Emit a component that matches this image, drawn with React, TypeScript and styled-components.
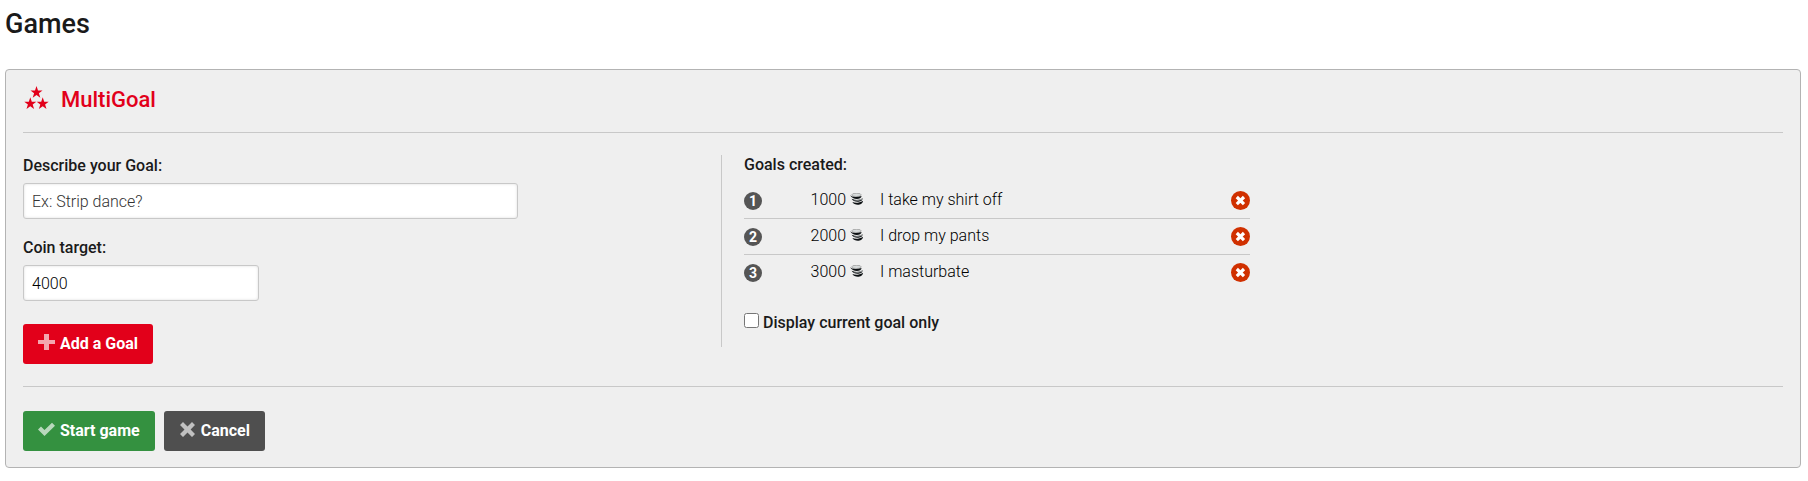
import React, { useState } from "react";
import styled, { createGlobalStyle, css } from "styled-components";

const GlobalStyle = createGlobalStyle`
  *, *::before, *::after { box-sizing: border-box; }
  body {
    margin: 0;
    background: #fff;
    color: #1a1a1a;
    font: 300 16px/20px Roboto, "Liberation Sans", sans-serif;
  }
`;

const Page = styled.main`
  padding: 8px 7px 12px 5px;
`;

const PageTitle = styled.h1`
  margin: 0 0 29px;
  font-size: 27px;
  line-height: 32px;
  font-weight: 500;
`;

const Panel = styled.section`
  padding: 16px 17px;
  background: #efefef;
  border: 1px solid #b3b3b3;
  border-radius: 4px;
`;

const PanelHeader = styled.header`
  display: flex;
  align-items: center;
  gap: 12px;
  padding-bottom: 18px;
  border-bottom: 1px solid #c8c8c8;
`;

const StarsIcon = styled.svg`
  width: 26px;
  height: 28px;
  fill: #e2001a;
`;

const PanelTitle = styled.h2`
  margin: 0;
  color: #e2001a;
  font-size: 22px;
  line-height: 28px;
  font-weight: 500;
`;

const Columns = styled.div`
  display: grid;
  grid-template-columns: calc(40% - 6px) minmax(0, 1fr);
  align-items: start;
  padding: 22px 0;
  border-bottom: 1px solid #c8c8c8;
`;

const Form = styled.form`
  display: flex;
  flex-direction: column;
  align-items: flex-start;
  gap: 19px;
  padding-top: 1px;
`;

const labelText = css`
  font-size: 16px;
  line-height: 20px;
  font-weight: 500;
`;

const Field = styled.div`
  display: flex;
  flex-direction: column;
  gap: 7px;
  width: 100%;
`;

const Label = styled.label`
  ${labelText}
`;

const TextInput = styled.input<{ $width: string }>`
  width: 100%;
  max-width: ${(p) => p.$width};
  height: 36px;
  padding: 0 8px;
  border: 1px solid #c8c8c8;
  border-radius: 3px;
  background: #fff;
  box-shadow: inset 0 0 3px #ddd;
  color: #000;
  font: inherit;
  &::placeholder { color: #333; opacity: 1; }
`;

const Button = styled.button<{ $color: string }>`
  display: inline-flex;
  align-items: center;
  gap: 5px;
  height: 40px;
  padding: 0 15px;
  border: 0;
  border-radius: 3px;
  background: ${(p) => p.$color};
  color: #fff;
  font: 700 16px/20px Roboto, "Liberation Sans", sans-serif;
  cursor: pointer;
`;

const FormFooter = styled.div`
  padding-top: 4px;
`;

const ButtonIcon = styled.svg`
  width: 17px;
  height: 20px;
  fill: #fff;
  opacity: 0.65;
`;

const Goals = styled.div`
  min-height: 192px;
  padding-left: 22px;
  border-left: 1px solid #c8c8c8;
`;

const GoalsTitle = styled.h3`
  margin: 0 0 7px;
  ${labelText}
`;

const GoalTable = styled.table`
  width: 100%;
  max-width: 506px;
  border-collapse: collapse;
`;

const GoalRow = styled.tr`
  height: 36px;
  & + & { border-top: 1px solid #c8c8c8; }
`;

const Cell = styled.td<{ $width?: string; $align?: string }>`
  width: ${(p) => p.$width ?? "auto"};
  padding: 0;
  text-align: ${(p) => p.$align ?? "left"};
  vertical-align: middle;
  color: #000;
`;

const Badge = styled.span`
  display: flex;
  align-items: center;
  justify-content: center;
  width: 18px;
  height: 18px;
  margin-top: 2px;
  border-radius: 50%;
  background: #555;
  color: #fff;
  font-size: 14px;
  line-height: 18px;
  font-weight: 700;
`;

const Amount = styled.span`
  display: inline-flex;
  align-items: center;
  gap: 4px;
  padding-right: 17px;
`;

const CoinIcon = styled.svg`
  width: 13px;
  height: 12px;
  margin-bottom: 2px;
`;

const RemoveButton = styled.button`
  display: block;
  width: 19px;
  height: 19px;
  margin: 1px 0 0 auto;
  padding: 0;
  border: 0;
  background: none;
  cursor: pointer;
  svg { display: block; }
`;

const CheckLine = styled.label`
  display: flex;
  align-items: center;
  gap: 4px;
  margin-top: 23px;
  ${labelText}
`;

const Checkbox = styled.input`
  width: 15px;
  height: 15px;
  margin: 0 0 5px;
`;

const Actions = styled.div`
  display: flex;
  gap: 9px;
  padding-top: 24px;
`;

const STAR = "M0-6.5 1.5-2 6-2 2.4.8 3.8 5.2 0 2.5-3.8 5.2-2.4.8-6-2-1.5-2Z";

const Coins = () => (
  <CoinIcon viewBox="0 0 13 12" aria-hidden="true">
    <ellipse cx="6.5" cy="1.9" rx="4.8" ry="1.6" fill="#d8dcdc" stroke="#888" strokeWidth=".6" />
    <path d="M0 2C1.5 4 6 4.6 11.6 3 11.3 7 2.5 7.4 0 2Z" fill="#0c1012" />
    <path d="M1.6 5.8C5 7.4 9 7.3 12.6 5.2 12.8 9.6 3.6 10 1.6 5.8Z" fill="#0c1012" />
    <path d="M2.4 9C5 10.2 9 10.2 13 7.8 12.8 12.8 4.2 13 2.4 9Z" fill="#0c1012" />
    <path d="M4 6.8Q8 8 11.8 6.4" fill="none" stroke="#c8cccc" strokeWidth=".8" />
  </CoinIcon>
);

const initialGoals = [
  { coins: 1000, text: "I take my shirt off" },
  { coins: 2000, text: "I drop my pants" },
  { coins: 3000, text: "I masturbate" },
];

export default function App() {
  const [goals, setGoals] = useState(initialGoals);
  const [description, setDescription] = useState("");
  const [target, setTarget] = useState("4000");

  const addGoal = (event: React.FormEvent) => {
    event.preventDefault();
    if (!description.trim()) return;
    setGoals([...goals, { coins: Number(target), text: description }]);
    setDescription("");
  };

  return (
    <>
      <GlobalStyle />
      <Page>
        <PageTitle>Games</PageTitle>
        <Panel>
          <PanelHeader>
            <StarsIcon viewBox="0 0 26 28" aria-hidden="true">
              <path d={STAR} transform="translate(13.5 6.5)" />
              <path d={STAR} transform="translate(7.3 17.7)" />
              <path d={STAR} transform="translate(19.7 17.7)" />
            </StarsIcon>
            <PanelTitle>MultiGoal</PanelTitle>
          </PanelHeader>
          <Columns>
            <Form onSubmit={addGoal}>
              <Field>
                <Label htmlFor="goal">Describe your Goal:</Label>
                <TextInput
                  id="goal"
                  $width="495px"
                  placeholder="Ex: Strip dance?"
                  value={description}
                  onChange={(e) => setDescription(e.target.value)}
                />
              </Field>
              <Field>
                <Label htmlFor="target">Coin target:</Label>
                <TextInput
                  id="target"
                  $width="236px"
                  value={target}
                  onChange={(e) => setTarget(e.target.value)}
                />
              </Field>
              <FormFooter>
                <Button type="submit" $color="#e2001a">
                  <ButtonIcon viewBox="0 0 17 20" aria-hidden="true">
                    <path d="M6 0h5v6h6v4h-6v6H6v-6H0V6h6z" />
                  </ButtonIcon>
                  Add a Goal
                </Button>
              </FormFooter>
            </Form>
            <Goals>
              <GoalsTitle>Goals created:</GoalsTitle>
              <GoalTable>
                <tbody>
                  {goals.map((goal, i) => (
                    <GoalRow key={goal.text}>
                      <Cell $width="42px">
                        <Badge>{i + 1}</Badge>
                      </Cell>
                      <Cell $width="94px" $align="right">
                        <Amount>
                          {goal.coins}
                          <Coins />
                        </Amount>
                      </Cell>
                      <Cell>{goal.text}</Cell>
                      <Cell $width="32px">
                        <RemoveButton
                          type="button"
                          aria-label={`Remove goal ${i + 1}`}
                          onClick={() => setGoals(goals.filter((_, n) => n !== i))}
                        >
                          <svg width="19" height="19" viewBox="0 0 19 19" aria-hidden="true">
                            <circle cx="9.5" cy="9.5" r="9.5" fill="#d03000" />
                            <path d="m5.8 6 7.2 7.2m0-7.2-7.2 7.2" stroke="#fff" strokeWidth="3.2" />
                          </svg>
                        </RemoveButton>
                      </Cell>
                    </GoalRow>
                  ))}
                </tbody>
              </GoalTable>
              <CheckLine>
                <Checkbox type="checkbox" />
                Display current goal only
              </CheckLine>
            </Goals>
          </Columns>
          <Actions>
            <Button type="button" $color="#349140">
              <ButtonIcon viewBox="0 0 17 20" aria-hidden="true">
                <path d="m0 8.5 3-3 3.5 3.5L14 1.8l3 3L6.5 15z" />
              </ButtonIcon>
              Start game
            </Button>
            <Button type="button" $color="#4f4f4f">
              <ButtonIcon viewBox="0 0 17 20" aria-hidden="true">
                <path d="m4 1 4.5 4.4L13 1l3 3-4.4 4.5L16 13l-3 3-4.5-4.5L4 16l-3-3 4.5-4.5L1 4z" />
              </ButtonIcon>
              Cancel
            </Button>
          </Actions>
        </Panel>
      </Page>
    </>
  );
}
